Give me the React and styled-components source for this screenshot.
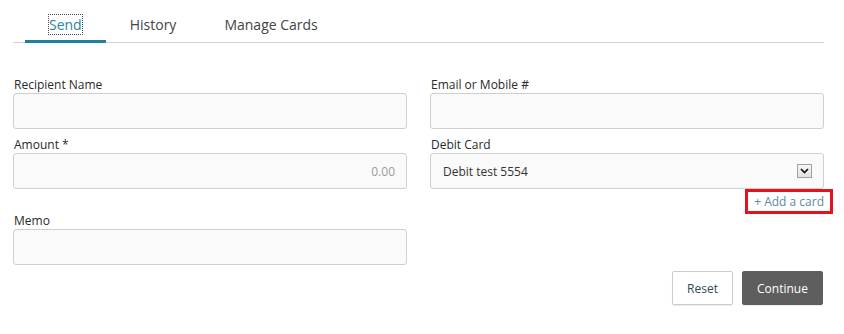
import styled, { createGlobalStyle } from "styled-components";

const GlobalStyle = createGlobalStyle`
  body {
    margin: 0;
    background: #ffffff;
    font-family: "Open Sans", "Liberation Sans", Arial, sans-serif;
    color: #333333;
  }
`;

const Page = styled.div`
  width: 811px;
  margin-left: 13px;
  height: 334px;
`;

const TabList = styled.div`
  display: flex;
  padding-left: 12px;
  border-bottom: 1px solid #d2d2d2;
`;

const Tab = styled.div`
  padding: 15px 24px 5px;
  font-size: 14px;
  line-height: 20px;
  color: ${(props) => (props.active ? "#2a86a6" : "#444444")};
  border-bottom: 3px solid ${(props) => (props.active ? "#1f7f9e" : "transparent")};
  margin-bottom: -1px;
`;

const Focused = styled.span`
  outline: 1px dotted #4a4a4a;
`;

const Form = styled.div`
  display: grid;
  grid-template-columns: 394px 394px;
  column-gap: 23px;
  row-gap: 7px;
  padding-top: 33px;
`;

const Field = styled.div`
  display: flex;
  flex-direction: column;
`;

const Label = styled.label`
  font-size: 12px;
  line-height: 17px;
  color: #2a2a2a;
  padding-left: 1px;
`;

const Input = styled.div`
  height: 36px;
  box-sizing: border-box;
  border: 1px solid #cfcfcf;
  border-radius: 3px;
  background: #fafafa;
  display: flex;
  align-items: center;
  justify-content: ${(props) => (props.right ? "flex-end" : "flex-start")};
  padding: 0 11px 0 12px;
  font-size: 12px;
  color: ${(props) => (props.muted ? "#9a9a9a" : "#333333")};
`;

const SelectBox = styled(Input)`
  justify-content: space-between;
  padding-right: 11px;
`;

const Arrow = styled.span`
  width: 15px;
  height: 14px;
  box-sizing: border-box;
  border: 1px solid #a0a0a0;
  background: linear-gradient(#f7f7f7, #e2e2e2);
  display: flex;
  align-items: center;
  justify-content: center;
`;

const AddCardRow = styled.div`
  height: 16px;
  display: flex;
  justify-content: flex-end;
`;

const AddCard = styled.a`
  display: inline-block;
  height: 25px;
  box-sizing: border-box;
  border: 3px solid #e1141d;
  padding: 2px 6px;
  margin-right: -9px;
  font-size: 12px;
  line-height: 15px;
  color: #5b87a8;
  text-decoration: none;
  position: relative;
  z-index: 1;
`;

const Actions = styled.div`
  display: flex;
  justify-content: flex-end;
  gap: 9px;
  padding-top: 6px;
  padding-right: 1px;
`;

const Button = styled.button`
  height: 34px;
  min-width: ${(props) => (props.primary ? "81px" : "61px")};
  box-sizing: border-box;
  border-radius: 2px;
  border: 1px solid ${(props) => (props.primary ? "#5e5e5e" : "#cccccc")};
  background: ${(props) => (props.primary ? "#5e5e5e" : "#ffffff")};
  color: ${(props) => (props.primary ? "#ffffff" : "#2f4b55")};
  font-family: "Open Sans", "Liberation Sans", Arial, sans-serif;
  font-size: 12px;
  padding: 0 12px;
  box-shadow: 0 1px 1px rgba(0, 0, 0, 0.08);
`;

export default function App() {
  return (
    <>
      <GlobalStyle />
      <Page>
        <TabList>
          <Tab active>
            <Focused>Send</Focused>
          </Tab>
          <Tab>History</Tab>
          <Tab>Manage Cards</Tab>
        </TabList>
        <Form>
          <Field>
            <Label>Recipient Name</Label>
            <Input />
          </Field>
          <Field>
            <Label>Email or Mobile #</Label>
            <Input />
          </Field>
          <Field>
            <Label>Amount *</Label>
            <Input right muted>0.00</Input>
          </Field>
          <Field>
            <Label>Debit Card</Label>
            <SelectBox>
              <span>Debit test 5554</span>
              <Arrow>
                <svg width="9" height="6" viewBox="0 0 9 6">
                  <path d="M1 1 L4.5 4.6 L8 1" fill="none" stroke="#111" strokeWidth="1.7" />
                </svg>
              </Arrow>
            </SelectBox>
            <AddCardRow>
              <AddCard href="#">+ Add a card</AddCard>
            </AddCardRow>
          </Field>
          <Field>
            <Label>Memo</Label>
            <Input />
          </Field>
          <div />
        </Form>
        <Actions>
          <Button>Reset</Button>
          <Button primary>Continue</Button>
        </Actions>
      </Page>
    </>
  );
}
